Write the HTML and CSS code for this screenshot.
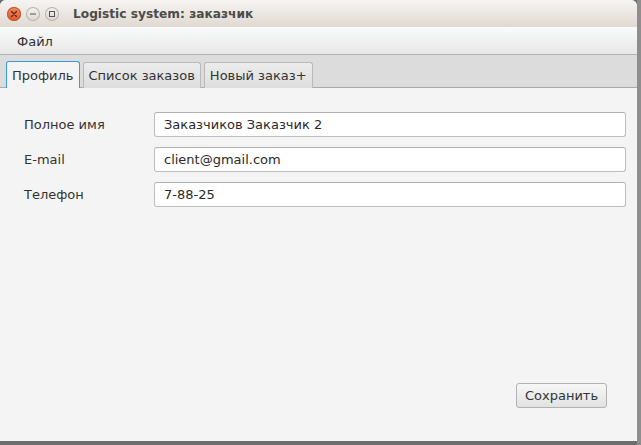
FILE: index.html
```html
<!DOCTYPE html>
<html lang="ru">
<head>
<meta charset="utf-8">
<title>Logistic system: заказчик</title>
<link rel="stylesheet" href="styles.css">
</head>
<body>
<div class="screen">
  <div class="window">
    <div class="titlebar">
      <div class="controls">
        <span class="wbtn close"><svg width="14" height="14" viewBox="0 0 14 14"><path d="M4.5 4.5 L9.5 9.5 M9.5 4.5 L4.5 9.5" stroke="#5a2a1a" stroke-width="1.3" stroke-linecap="round"/></svg></span>
        <span class="wbtn"><svg width="14" height="14" viewBox="0 0 14 14"><path d="M4 7 H10" stroke="#555" stroke-width="1.1"/></svg></span>
        <span class="wbtn"><svg width="14" height="14" viewBox="0 0 14 14"><rect x="4.5" y="4.5" width="5" height="5" fill="none" stroke="#555" stroke-width="1"/></svg></span>
      </div>
      <div class="title">Logistic system: заказчик</div>
    </div>
    <div class="menubar"><span class="menu">Файл</span></div>
    <div class="tabbar">
      <div class="tab selected">Профиль</div>
      <div class="tab">Список заказов</div>
      <div class="tab">Новый заказ+</div>
    </div>
    <div class="content">
      <div class="form">
        <div class="row"><span class="label">Полное имя</span><div class="field">Заказчиков Заказчик 2</div></div>
        <div class="row"><span class="label">E-mail</span><div class="field">client@gmail.com</div></div>
        <div class="row"><span class="label">Телефон</span><div class="field">7-88-25</div></div>
      </div>
      <div class="actions"><button class="btn">Сохранить</button></div>
    </div>
  </div>
</div>
</body>
</html>
```
FILE: styles.css
```css
html, body {
  margin: 0;
  padding: 0;
}
body {
  width: 641px;
  height: 445px;
  overflow: hidden;
  background: #6e6e6e;
  font-family: "DejaVu Sans", sans-serif;
  font-size: 13px;
  color: #333;
}
.screen {
  width: 641px;
  height: 445px;
  background: linear-gradient(to right, transparent 637px, #8e8e8e 637px);
}
.window {
  width: 637px;
  height: 441px;
  display: flex;
  flex-direction: column;
  background: #f4f4f4;
  border-top-right-radius: 6px;
  border-top-left-radius: 6px;
  overflow: hidden;
}
.titlebar {
  height: 27px;
  flex: none;
  display: flex;
  align-items: center;
  background: linear-gradient(#f6f4f2, #e0d9d2);
}
.controls {
  display: flex;
  gap: 5px;
  padding-left: 7px;
}
.wbtn {
  width: 14px;
  height: 14px;
  border-radius: 50%;
  background: linear-gradient(#f4f2ef, #dcd7d1);
  box-shadow: inset 0 0 0 1px #b9b3ad;
  display: block;
}
.wbtn svg { display: block; }
.close {
  background: linear-gradient(#f48a5c, #e2582c);
  box-shadow: inset 0 0 0 1px #c4532f;
}
.title {
  margin-left: 14px;
  font-weight: bold;
  font-size: 12.2px;
  color: #4d4b48;
}
.menubar {
  height: 28px;
  flex: none;
  box-sizing: border-box;
  display: flex;
  align-items: center;
  padding-left: 17px;
  padding-top: 1px;
  background: linear-gradient(#f9fafa, #e8e8e8);
  border-bottom: 1px solid #b2b2b2;
}
.tabbar {
  height: 33px;
  flex: none;
  box-sizing: border-box;
  display: flex;
  align-items: flex-end;
  gap: 3px;
  padding-left: 6px;
  background: #dcdcdc;
  border-bottom: 1px solid #aaaaaa;
}
.tab {
  height: 26px;
  box-sizing: border-box;
  padding: 0 5px;
  display: flex;
  align-items: center;
  border: 1px solid #b9b9b9;
  border-bottom: none;
  border-radius: 3px 3px 0 0;
  background: linear-gradient(#ececec, #dedede);
  margin-bottom: -1px;
}
.tab.selected {
  background: #f4f4f4;
  border-color: #3a9ad9;
  height: 27px;
}
.content {
  flex: 1;
  display: flex;
  flex-direction: column;
  padding: 24px 11px 33px 24px;
}
.form {
  display: flex;
  flex-direction: column;
  gap: 10px;
}
.row {
  display: flex;
  align-items: flex-start;
}
.label {
  width: 130px;
  flex: none;
  padding-top: 5px;
}
.field {
  flex: 1;
  height: 25px;
  box-sizing: border-box;
  background: #fff;
  border: 1px solid #bdbdbd;
  border-top-color: #b0b0b0;
  border-radius: 3px;
  padding-left: 9px;
  display: flex;
  align-items: center;
  color: #2a2a2a;
}
.actions {
  margin-top: auto;
  display: flex;
  justify-content: flex-end;
  padding-right: 19px;
}
.btn {
  width: 91px;
  height: 25px;
  font: inherit;
  color: #333;
  border: 1px solid #b1b1b1;
  border-radius: 3px;
  background: linear-gradient(#f7f7f7, #e2e2e2);
  padding: 0;
}
```
